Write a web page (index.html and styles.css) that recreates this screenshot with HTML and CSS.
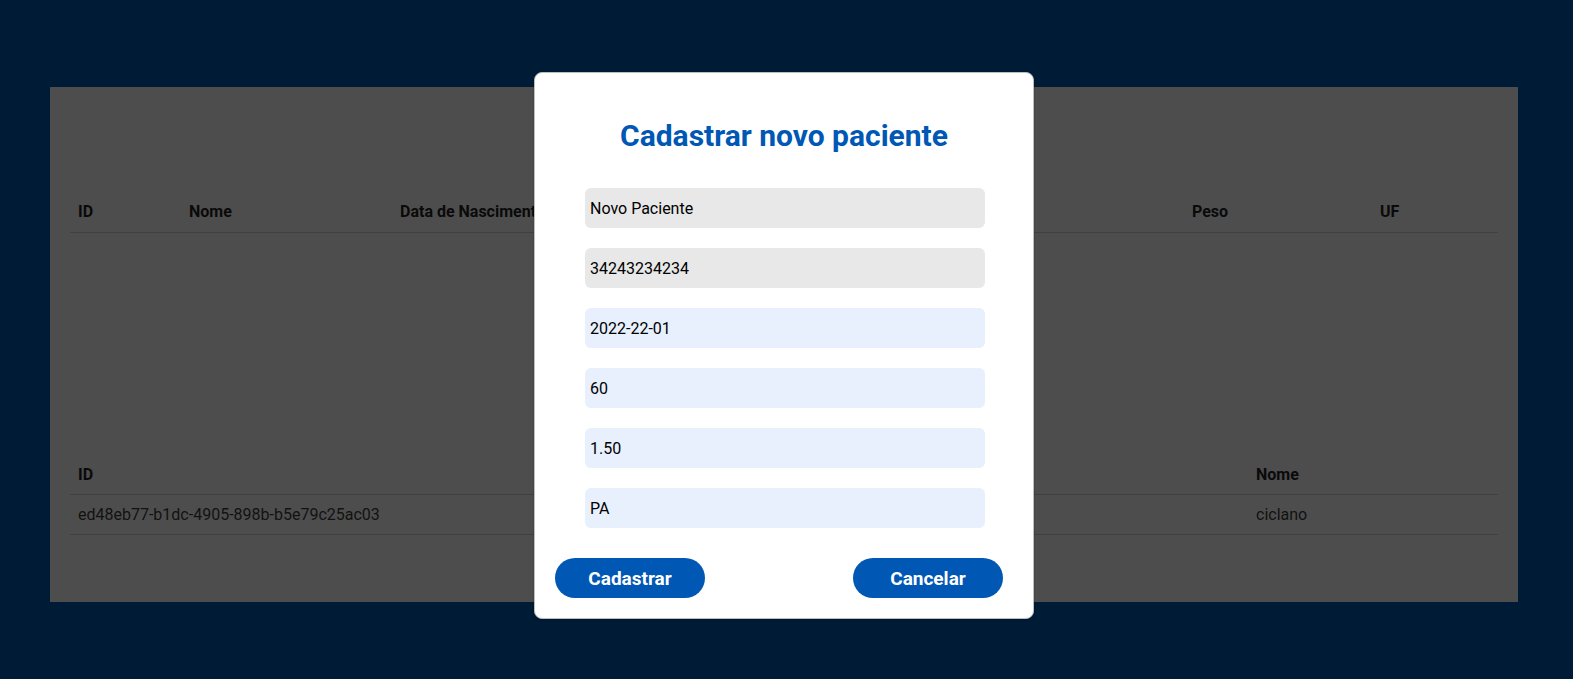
FILE: index.html
```html
<!DOCTYPE html>
<html lang="pt-BR">
<head>
<meta charset="utf-8">
<title>Pacientes</title>
<link rel="stylesheet" href="styles.css">
</head>
<body>
<main class="panel">
  <table class="grid grid-pacientes">
    <colgroup>
      <col class="c-id"><col class="c-nome"><col class="c-mid"><col class="c-mid"><col class="c-mid"><col class="c-peso"><col class="c-uf">
    </colgroup>
    <thead>
      <tr><th>ID</th><th>Nome</th><th>Data de Nascimento</th><th>CPF</th><th>Altura</th><th>Peso</th><th>UF</th></tr>
    </thead>
  </table>

  <table class="grid grid-medicos">
    <colgroup><col class="c-id2"><col class="c-nome2"></colgroup>
    <thead><tr><th>ID</th><th>Nome</th></tr></thead>
    <tbody><tr><td>ed48eb77-b1dc-4905-898b-b5e79c25ac03</td><td>ciclano</td></tr></tbody>
  </table>
</main>

<div class="modal">
  <h2 class="modal-title">Cadastrar novo paciente</h2>
  <form class="modal-form">
    <input class="field" type="text" value="Novo Paciente">
    <input class="field" type="text" value="34243234234">
    <input class="field field-auto" type="text" value="2022-22-01">
    <input class="field field-auto" type="text" value="60">
    <input class="field field-auto" type="text" value="1.50">
    <input class="field field-auto" type="text" value="PA">
  </form>
  <div class="modal-actions">
    <button class="btn" type="button">Cadastrar</button>
    <button class="btn" type="button">Cancelar</button>
  </div>
</div>
</body>
</html>
```

FILE: styles.css
```css
* { box-sizing: border-box; }

html, body {
  margin: 0;
  height: 100%;
}

body {
  background: #001b36;
  font-family: Roboto, "Liberation Sans", Arial, sans-serif;
  padding: 87px 55px 0 50px;
}

.panel {
  background: #4d4d4d;
  padding: 105px 20px 67px 20px;
  color: #111;
}

.grid {
  width: 100%;
  border-collapse: collapse;
  table-layout: fixed;
  font-size: 16px;
}

.grid th,
.grid td {
  text-align: left;
  padding: 0 8px;
  height: 40px;
  border-bottom: 1px solid #404040;
  white-space: nowrap;
  overflow: hidden;
}

.grid th {
  font-weight: 700;
  color: #0a0a0a;
}

.grid td {
  font-weight: 400;
  color: #121212;
}

.grid-medicos {
  margin-top: 222px;
}

.c-id { width: 111px; }
.c-nome { width: 211px; }
.c-mid { width: 264px; }
.c-peso { width: 188px; }
.c-uf { width: 126px; }

.c-id2 { width: 1178px; }
.c-nome2 { width: 250px; }

.modal {
  position: absolute;
  left: 534px;
  top: 72px;
  width: 500px;
  height: 547px;
  background: #fff;
  border: 1px solid #bdbdbd;
  border-radius: 8px;
  box-shadow: 0 1px 2px rgba(0, 0, 0, 0.25);
  display: flex;
  flex-direction: column;
}

.modal-title {
  margin: 46px 0 0 0;
  font-size: 30px;
  line-height: 34px;
  font-weight: 700;
  color: #0057b4;
  text-align: center;
}

.modal-form {
  margin: 35px 0 0 50px;
  display: flex;
  flex-direction: column;
  gap: 20px;
}

.field {
  width: 400px;
  height: 40px;
  border: none;
  outline: none;
  border-radius: 6px;
  background: #e8e8e8;
  padding: 0 5px;
  font-family: Roboto, "Liberation Sans", Arial, sans-serif;
  font-size: 16px;
  color: #000;
}

.field-auto {
  background: #e8f0fe;
}

.modal-actions {
  margin-top: 30px;
  padding: 0 30px 0 20px;
  display: flex;
  justify-content: space-between;
}

.btn {
  width: 150px;
  height: 40px;
  border: none;
  border-radius: 20px;
  background: #0057b4;
  color: #fff;
  font-family: Roboto, "Liberation Sans", Arial, sans-serif;
  font-size: 19px;
  font-weight: 700;
  padding: 0;
}
```
